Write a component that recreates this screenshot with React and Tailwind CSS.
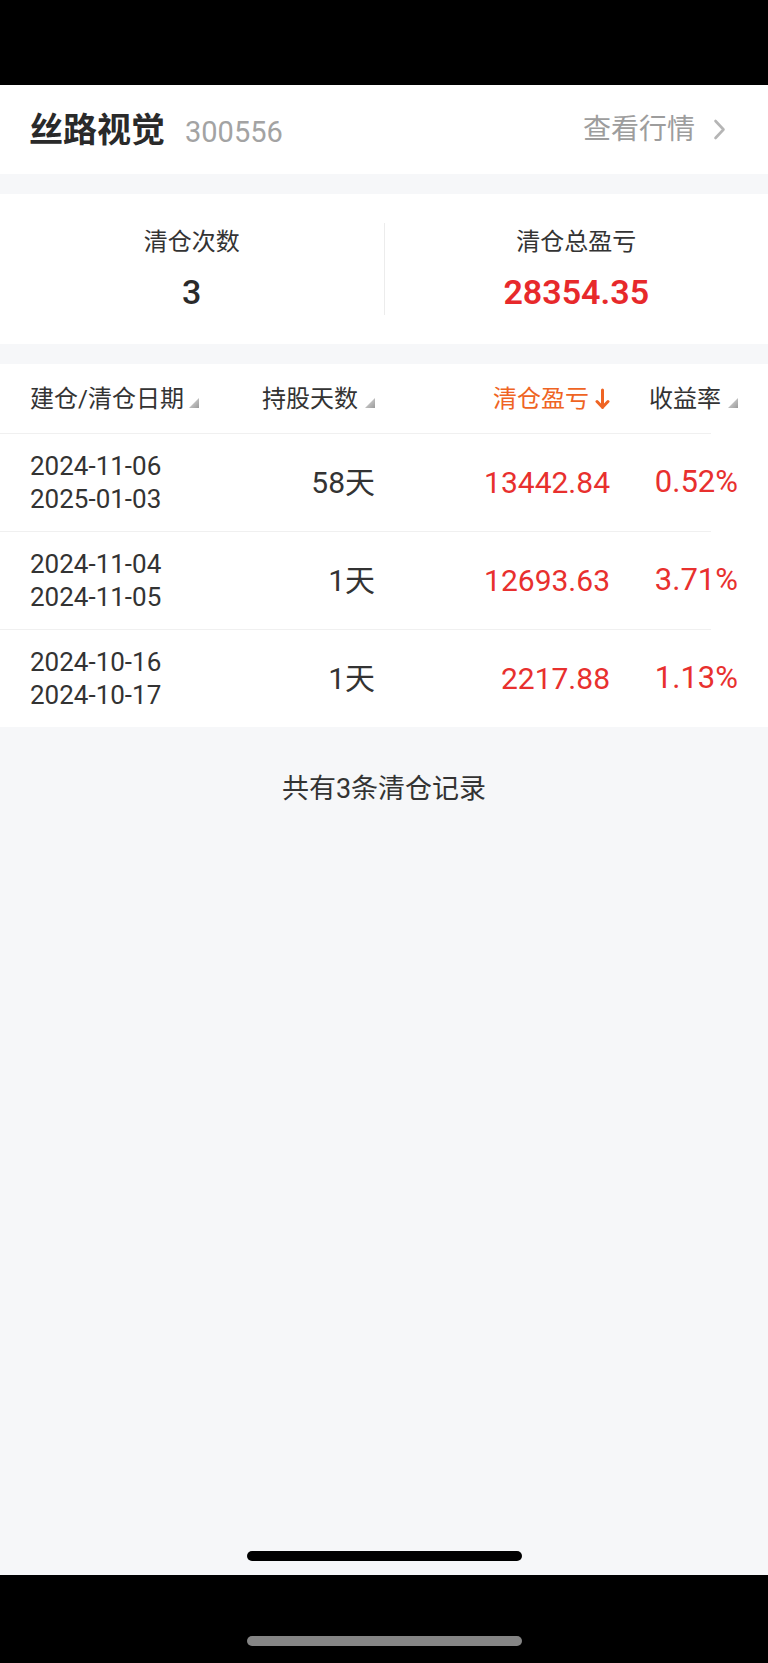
import React from 'react';

const rows = [
  { open: '2024-11-06', close: '2025-01-03', days: '58天', profit: '13442.84', rate: '0.52%' },
  { open: '2024-11-04', close: '2024-11-05', days: '1天', profit: '12693.63', rate: '3.71%' },
  { open: '2024-10-16', close: '2024-10-17', days: '1天', profit: '2217.88', rate: '1.13%' },
];

const SortMark = () => (
  <svg width="10" height="10" viewBox="0 0 10 10" className="shrink-0">
    <defs>
      <linearGradient id="tri" x1="0" y1="0" x2="1" y2="1">
        <stop offset="0" stopColor="#e2e2e2" />
        <stop offset="1" stopColor="#9a9a9a" />
      </linearGradient>
    </defs>
    <polygon points="10,0 10,10 0,10" fill="url(#tri)" />
  </svg>
);

const DownArrow = () => (
  <svg width="15" height="22" viewBox="0 0 15 22" fill="none" stroke="#ef6423" strokeWidth="3" strokeLinecap="round" strokeLinejoin="round">
    <path d="M7.5 2v17" />
    <path d="M2 13.5l5.5 5.8 5.5-5.8" />
  </svg>
);

const App = () => {
  return (
    <div className="h-[1663px] flex flex-col bg-[#f6f7f9] font-[family-name:Roboto,'Noto_Sans_CJK_SC',sans-serif] text-[#333]">
      <div className="h-[85px] bg-black shrink-0" />

      {/* stock header */}
      <div className="h-[89px] bg-white flex items-center justify-between pl-[29px] pr-[42px] shrink-0">
        <div className="flex items-baseline gap-[20px]">
          <span className="text-[34px] font-bold text-[#2a2a2a] leading-none">丝路视觉</span>
          <span className="text-[29px] text-[#a3a3a3] leading-none">300556</span>
        </div>
        <div className="flex items-center gap-[18px] text-[#9d9d9d]">
          <span className="text-[28px] leading-none">查看行情</span>
          <svg width="13" height="21" viewBox="0 0 13 21" fill="none" stroke="#b5b5b5" strokeWidth="2.6" strokeLinecap="round" strokeLinejoin="round">
            <path d="M2.5 2l8 8.5-8 8.5" />
          </svg>
        </div>
      </div>

      <div className="h-[20px] shrink-0" />

      {/* summary */}
      <div className="h-[150px] bg-white flex items-center shrink-0">
        <div className="flex-1 flex flex-col items-center">
          <span className="text-[24px] leading-[32px]">清仓次数</span>
          <span className="mt-[14px] text-[34px] leading-[40px] font-medium text-[#2a2a2a]">3</span>
        </div>
        <div className="w-px h-[92px] bg-[#ececec]" />
        <div className="flex-1 flex flex-col items-center">
          <span className="text-[24px] leading-[32px]">清仓总盈亏</span>
          <span className="mt-[14px] text-[34px] leading-[40px] font-semibold text-[#e7292b]">28354.35</span>
        </div>
      </div>

      <div className="h-[20px] shrink-0" />

      {/* table */}
      <div className="bg-white shrink-0">
        <div className="h-[69px] flex items-center pl-[30px] text-[24px]">
          <div className="w-[210px] flex items-center gap-[5px]">
            <span>建仓/清仓日期</span>
            <span className="mt-[8px]"><SortMark /></span>
          </div>
          <div className="w-[135px] flex items-center justify-end gap-[7px]">
            <span>持股天数</span>
            <span className="mt-[8px]"><SortMark /></span>
          </div>
          <div className="w-[235px] flex items-center justify-end gap-[6px] text-[#ef6423]">
            <span>清仓盈亏</span>
            <DownArrow />
          </div>
          <div className="w-[128px] flex items-center justify-end gap-[7px]">
            <span>收益率</span>
            <span className="mt-[8px]"><SortMark /></span>
          </div>
        </div>
        {rows.map((row) => (
          <div key={row.open}>
            <div className="h-px w-[711px] bg-[#f0f0f0]" />
            <div className="h-[97px] flex items-center pl-[30px]">
              <div className="w-[210px] flex flex-col text-[26px] leading-[33px]">
                <span>{row.open}</span>
                <span>{row.close}</span>
              </div>
              <div className="w-[135px] text-right text-[30px]">{row.days}</div>
              <div className="w-[235px] text-right text-[30px] text-[#e8302e]">{row.profit}</div>
              <div className="w-[128px] text-right text-[31px] text-[#e8302e]">{row.rate}</div>
            </div>
          </div>
        ))}
      </div>

      <div className="mt-[45px] text-center text-[27px] leading-[34px]">共有3条清仓记录</div>

      <div className="flex-1" />

      <div className="flex justify-center pb-[14px] shrink-0">
        <div className="w-[275px] h-[10px] rounded-full bg-black" />
      </div>
      <div className="h-[88px] bg-black flex justify-center pt-[61px] shrink-0">
        <div className="w-[275px] h-[10px] rounded-full bg-[#858585]" />
      </div>
    </div>
  );
};

export default App;
